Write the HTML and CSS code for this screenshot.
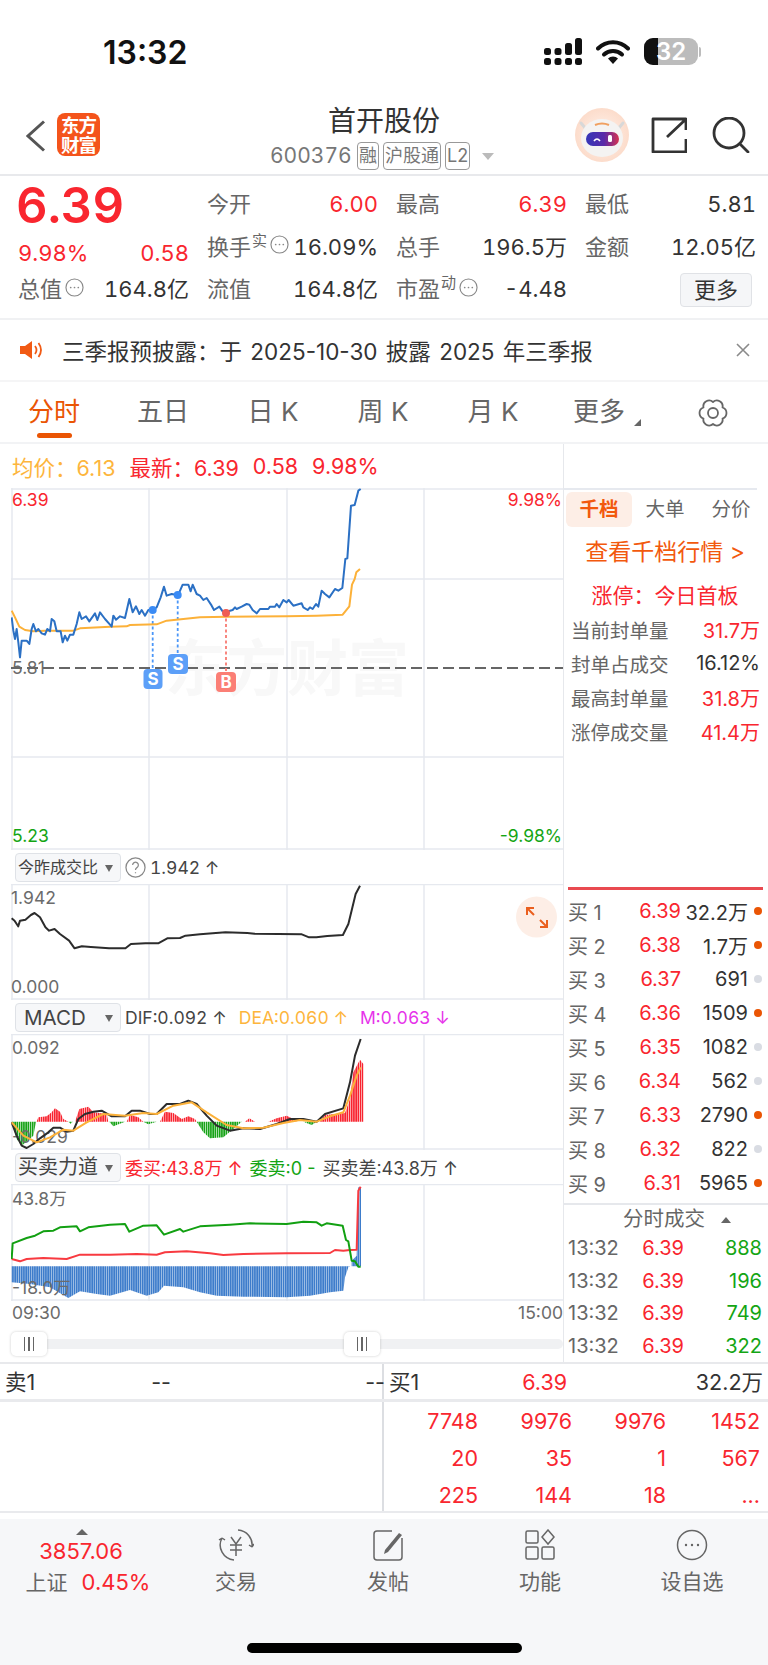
FILE: index.html
```html
<!DOCTYPE html>
<html lang="zh-CN">
<head>
<meta charset="utf-8">
<title>首开股份</title>
<link rel="stylesheet" href="styles.css">
</head>
<body>
<div class="page">
  <header class="status">
    <span class="clock">13:32</span>
    <div class="status-icons">
      <svg class="sig" viewBox="0 0 38 27"><g fill="#111"><rect x="0" y="10" width="7" height="7" rx="2.5"/><rect x="0" y="20" width="7" height="7" rx="2.5"/><rect x="10.500" y="10" width="7" height="7" rx="2.5"/><rect x="10.500" y="20" width="7" height="7" rx="2.5"/><rect x="21" y="5" width="7" height="12" rx="2.5"/><rect x="21" y="20" width="7" height="7" rx="2.5"/><rect x="31" y="0" width="7" height="17" rx="2.5"/><rect x="31" y="20" width="7" height="7" rx="2.5"/></g></svg>
      <svg class="wifi" viewBox="0 0 34 24"><path d="M2 8.500a21 21 0 0 1 30 0" fill="none" stroke="#111" stroke-width="4" stroke-linecap="round"/><path d="M8 14.500a13 13 0 0 1 18 0" fill="none" stroke="#111" stroke-width="4" stroke-linecap="round"/><path d="M17 24l-5-5.500a7 7 0 0 1 10 0z" fill="#111"/></svg>
      <div class="batt"><span class="batt-fill"></span><span class="batt-num">32</span></div>
      <span class="batt-nub"></span>
    </div>
  </header>

  <nav class="nav">
    <svg class="back" viewBox="0 0 20 32"><path d="M18 1.500 2 16l16 14.500" fill="none" stroke="#555" stroke-width="3"/></svg>
    <div class="logo">东方<br>财富</div>
    <div class="nav-title">
      <div class="stock-name">首开股份</div>
      <div class="stock-sub"><span class="code">600376</span><span class="tag">融</span><span class="tag">沪股通</span><span class="tag">L2</span><span class="caret"></span></div>
    </div>
    <div class="nav-right">
      <svg class="robot" viewBox="0 0 54 54">
        <defs>
          <radialGradient id="halo"><stop offset="0" stop-color="#fff3ec"/><stop offset="1" stop-color="#fcdccb"/></radialGradient>
          <linearGradient id="visor"><stop offset="0" stop-color="#3436b8"/><stop offset=".55" stop-color="#5a2aa8"/><stop offset="1" stop-color="#d63250"/></linearGradient>
        </defs>
        <circle cx="27" cy="27" r="27" fill="url(#halo)"/>
        <path d="M6 15l5 6M48 15l-5 6" stroke="#d8d8d8" stroke-width="3" stroke-linecap="round"/>
        <ellipse cx="27" cy="30" rx="21" ry="19" fill="#f4f3f2"/>
        <path d="M20 17q7-3 14 0" stroke="#f0a060" stroke-width="2" fill="none"/>
        <rect x="11" y="24" width="33" height="14" rx="7" fill="url(#visor)"/>
        <path d="M19 33q3-4 6 0" stroke="#fff" stroke-width="1.600" fill="none"/>
        <rect x="33" y="27" width="4" height="7" rx="1.500" fill="#fff"/>
      </svg>
      <svg class="share" viewBox="0 0 36 36"><path d="M22 2H2v33h33V22M16 20 34 3M22 2h13v11" fill="none" stroke="#333" stroke-width="2.800" stroke-linejoin="round"/></svg>
      <svg class="search" viewBox="0 0 38 36"><circle cx="17" cy="16" r="15" fill="none" stroke="#333" stroke-width="2.800"/><path d="M28 27l8 8" stroke="#333" stroke-width="2.800" stroke-linecap="round"/></svg>
    </div>
  </nav>

  <section class="quote">
    <div class="big red">6.39</div>
    <div class="cell"><span class="lb">今开</span><span class="red">6.00</span></div>
    <div class="cell"><span class="lb">最高</span><span class="red">6.39</span></div>
    <div class="cell"><span class="lb">最低</span><span>5.81</span></div>
    <div class="cell chg red"><span>9.98%</span><span>0.58</span></div>
    <div class="cell"><span class="lb">换手<sup class="sup">实</sup><svg class="more-dot" viewBox="0 0 20 20"><circle cx="10" cy="10" r="9" /><path d="M6 10h.01M10 10h.01M14 10h.01"/></svg></span><span>16.09%</span></div>
    <div class="cell"><span class="lb">总手</span><span>196.5万</span></div>
    <div class="cell"><span class="lb">金额</span><span>12.05亿</span></div>
    <div class="cell"><span class="lb">总值<svg class="more-dot" viewBox="0 0 20 20"><circle cx="10" cy="10" r="9" /><path d="M6 10h.01M10 10h.01M14 10h.01"/></svg></span><span>164.8亿</span></div>
    <div class="cell"><span class="lb">流值</span><span>164.8亿</span></div>
    <div class="cell"><span class="lb">市盈<sup class="sup">动</sup><svg class="more-dot" viewBox="0 0 20 20"><circle cx="10" cy="10" r="9" /><path d="M6 10h.01M10 10h.01M14 10h.01"/></svg></span><span>-4.48</span></div>
    <div class="cell cell-end"><button class="more-btn">更多</button></div>
  </section>

  <section class="notice">
    <svg class="speaker" viewBox="0 0 24 18"><path d="M0 5h5l7-5v18l-7-5H0z" fill="#f15a14"/><path d="M15 5q3 4 0 8M18.500 2q5 7 0 14" fill="none" stroke="#f15a14" stroke-width="1.800"/></svg>
    <span class="notice-text">三季报预披露：于 2025-10-30 披露 2025 年三季报</span>
    <svg class="close" viewBox="0 0 14 14"><path d="M1 1l12 12M13 1 1 13" stroke="#8a8a8a" stroke-width="1.600"/></svg>
  </section>

  <section class="tabs">
    <div class="tab on">分时</div>
    <div class="tab">五日</div>
    <div class="tab">日 K</div>
    <div class="tab">周 K</div>
    <div class="tab">月 K</div>
    <div class="tab tab-last">更多<span class="corner"></span></div>
    <svg class="gear" viewBox="0 0 30 28"><path d="M15 3A5.800 5.800 0 0 1 24.530 8.500 5.800 5.800 0 0 1 24.530 19.500 5.800 5.800 0 0 1 15 25 5.800 5.800 0 0 1 5.470 19.500 5.800 5.800 0 0 1 5.470 8.500 5.800 5.800 0 0 1 15 3Z" fill="none" stroke="#666" stroke-width="1.800" stroke-linejoin="round"/><circle cx="15" cy="14" r="5" fill="none" stroke="#666" stroke-width="1.800"/></svg>
  </section>

  <main class="main">
    <div class="left">
      <div class="info"><span class="amber">均价：6.13</span><span class="red">最新：6.39</span><span class="red">0.58</span><span class="red">9.98%</span></div>

      <div class="panel p1">
        <svg class="chart" viewBox="11 489 552 362">
          <defs>
            <pattern id="st-r" patternUnits="userSpaceOnUse" width="6.600" height="10"><rect width="5" height="10" fill="#f8232f"/></pattern>
            <pattern id="st-g" patternUnits="userSpaceOnUse" width="6.600" height="10"><rect width="5" height="10" fill="#17a317"/></pattern>
            <pattern id="st-b" patternUnits="userSpaceOnUse" width="6.600" height="10"><rect width="5.400" height="10" fill="#3d7ccb"/></pattern>
          </defs>
          <text class="wm" x="165" y="692">东方财富</text>
          <path class="g" d="M12 489V851M149 489V851M287 489V851M424 489V851M11 490H563M11 580H563M11 758H563M11 850H563"/>
          <text class="ax red" x="12" y="507">6.39</text>
          <text class="ax red end" x="562" y="507">9.98%</text>
          <text class="ax gray" x="12" y="675">5.81</text>
          <text class="ax green" x="12" y="843">5.23</text>
          <text class="ax green end" x="562" y="843">-9.98%</text>
          <path class="dash" d="M11 669H563"/>
          <path class="vb" d="M152.700 611V672M177.700 596V657"/>
          <path class="vr" d="M226 614V675"/>
          <g transform="translate(10 575) scale(.33333)">
            <polyline class="ln amb" points="5,110 15,130 28,158 45,168 70,172 105,170 190,170 210,163 300,158 350,157 360,153 440,151 470,140 520,135 570,130 650,128 830,127 920,125 998,122 1018,97 1026,32 1034,15 1039,-5 1050,-15"/>
            <polyline class="ln blu" points="5,130 10,170 15,195 20,165 25,205 30,250 35,200 50,200 58,210 65,165 70,150 78,172 85,165 95,178 105,182 112,165 120,172 125,135 133,142 140,172 152,172 158,205 165,185 172,200 180,182 190,182 200,150 208,115 215,135 228,127 238,142 255,118 262,138 270,115 285,135 300,152 305,158 310,125 318,137 330,127 345,132 358,75 368,115 378,97 388,120 395,108 405,125 415,108 428,107 440,100 452,70 462,38 470,65 485,60 497,62 505,62 518,32 535,32 542,52 548,32 560,60 570,65 580,78 590,72 605,95 612,108 628,98 638,112 648,118 660,110 668,108 675,100 680,105 695,98 710,90 718,92 728,108 740,118 750,105 775,105 780,98 795,98 800,90 808,100 820,78 830,85 836,78 850,95 875,88 880,100 893,108 900,100 908,105 918,90 925,98 935,50 945,60 958,70 975,45 985,50 997,42 1006,-45 1012,-47 1023,-205 1034,-207 1045,-250 1052,-255"/>
          </g>
          <circle class="dot-b" cx="152.700" cy="611" r="4"/>
          <circle class="dot-b" cx="177.700" cy="596" r="4"/>
          <circle class="dot-r" cx="226" cy="614" r="4"/>
          <rect class="bs-b" x="143.500" y="670" width="19" height="20" rx="4"/>
          <text class="bs" x="153" y="686">S</text>
          <rect class="bs-b" x="168" y="655" width="20" height="20" rx="4"/>
          <text class="bs" x="178" y="671">S</text>
          <rect class="bs-r" x="216" y="673" width="20" height="20" rx="4"/>
          <text class="bs" x="226" y="689">B</text>
        </svg>
      </div>

      <div class="phead">
        <div class="dd dd-sm">今昨成交比<span class="dd-caret"></span></div>
        <svg class="help" viewBox="0 0 22 22"><circle cx="11" cy="11" r="10" fill="none" stroke="#888" stroke-width="1.300"/><path d="M8 8.500a3 3 0 1 1 4.500 2.600c-1 .6-1.500 1.100-1.500 2.400M11 16v1" fill="none" stroke="#888" stroke-width="1.300"/></svg>
        <span class="ph-v">1.942 ↑</span>
      </div>
      <div class="panel p2">
        <svg class="chart" viewBox="11 885 552 116">
          <path class="g" d="M12 885V1001M149 885V1001M287 885V1001M424 885V1001M11 885.500H563M11 1000H563"/>
          <text class="ax gray" x="11" y="905">1.942</text>
          <text class="ax gray" x="11" y="994">0.000</text>
          <g transform="translate(0 850) scale(.36364 .33333)">
            <polyline class="ln blk" points="32,208 40,215 50,232 55,215 70,212 85,198 95,192 110,205 125,235 135,245 150,240 165,255 190,275 205,298 215,295 225,292 250,294 300,298 345,298 360,285 400,283 435,283 460,268 495,267 510,260 550,256 620,250 680,252 700,254 830,256 850,265 870,265 900,261 943,258 958,225 968,180 978,135 990,110"/>
          </g>
          <circle class="exp-bg" cx="536.500" cy="918" r="20.500"/>
          <path class="exp" d="M527 909l7 7M540 921l7 7M527 916v-7h7M547 921v7h-7"/>
        </svg>
      </div>

      <div class="phead">
        <div class="dd dd-lg">MACD<span class="dd-caret"></span></div>
        <span class="ph-v">DIF:0.092 ↑</span><span class="ph-v amber">DEA:0.060 ↑</span><span class="ph-v magenta">M:0.063 ↓</span>
      </div>
      <div class="panel p3">
        <svg class="chart" viewBox="11 1035 552 116">
          <path class="g" d="M12 1035V1151M149 1035V1151M287 1035V1151M424 1035V1151M11 1035.500H563M11 1150H563"/>
          <g transform="translate(10 1040) scale(.33333)">
            <path fill="url(#st-r)" d="M80 248 85 235 110 232 125 220 135 208 150 218 160 240 175 248ZM195 248 208 210 235 203 250 220 290 225 295 248ZM350 248 360 228 385 235 400 248ZM450 248 465 218 490 222 515 240 535 232 555 240 560 248ZM705 248 718 238 735 248ZM775 248 800 238 830 230 850 240 860 248ZM930 248 945 228 1005 222 1020 180 1030 100 1050 62 1060 75 1060 248Z"/>
            <path fill="url(#st-g)" d="M5 248 78 248 70 290 35 320 20 300ZM175 248 188 248 182 254ZM298 248 345 248 310 262ZM400 248 440 248 415 256ZM560 248 695 248 670 270 640 295 600 298 580 280ZM880 248 920 248 905 258Z"/>
          </g>
          <text class="ax gray" x="12" y="1055">0.092</text>
          <text class="ax gray" x="12" y="1144">-0.029</text>
          <g transform="translate(10 1040) scale(.33333)">
            <polyline class="ln blk" points="5,250 20,290 35,320 50,327 70,315 90,298 115,280 130,266 150,266 170,278 190,275 205,240 225,225 250,218 275,215 305,232 345,232 365,215 390,215 420,225 440,225 470,195 510,195 535,185 560,195 590,230 620,260 660,275 700,268 750,270 800,255 840,240 880,240 920,248 945,225 1000,208 1020,130 1035,50 1052,0"/>
            <polyline class="ln amb" points="5,250 40,290 80,310 120,295 160,272 190,275 230,250 280,225 345,230 400,222 440,225 490,200 545,190 590,220 650,258 700,268 760,266 820,252 870,243 920,248 960,232 1000,220 1020,170 1040,110 1052,85"/>
          </g>
        </svg>
      </div>

      <div class="phead">
        <div class="dd">买卖力道<span class="dd-caret"></span></div>
        <span class="ph-s red">委买:43.8万 ↑</span><span class="ph-s green">委卖:0 -</span><span class="ph-s">买卖差:43.8万 ↑</span>
      </div>
      <div class="panel p4">
        <svg class="chart" viewBox="11 1185 552 117">
          <path class="g" d="M12 1185V1302M149 1185V1302M287 1185V1302M424 1185V1302M11 1185.500H563M11 1301H563"/>
          <g transform="translate(10 1185) scale(.33333)">
            <path fill="url(#st-b)" d="M5 247 5 295 60 300 120 310 175 342 210 322 260 330 300 335 360 318 410 335 445 325 462 305 520 310 570 325 620 335 700 338 830 340 900 335 960 325 1000 320 1005 280 1015 250 1020 247ZM1025 247 1025 230 1040 215 1045 10 1053 10 1053 247Z"/>
          </g>
          <text class="ax gray" x="12" y="1206">43.8万</text>
          <text class="ax gray" x="12" y="1295">-18.0万</text>
          <g transform="translate(10 1185) scale(.33333)">
            <polyline class="ln red-l" points="5,225 30,232 50,225 100,222 170,225 210,212 300,212 380,210 440,212 465,205 530,202 600,208 640,213 700,210 830,208 960,207 975,198 1000,200 1020,198 1040,197 1045,20 1052,8"/>
            <polyline class="ln grn-l" points="5,225 8,178 50,162 75,155 100,142 130,140 150,130 200,127 210,142 235,130 300,122 345,120 358,143 400,125 440,124 462,152 510,135 520,143 570,127 660,122 720,118 830,120 880,113 920,115 935,125 950,118 998,125 1008,168 1015,172 1025,230 1035,232 1045,248 1052,248"/>
          </g>
        </svg>
      </div>
      <div class="axis"><span>09:30</span><span>15:00</span></div>
      <div class="slider">
        <div class="track">
          <div class="handle h1"><i></i><i></i><i></i></div>
          <div class="handle h2"><i></i><i></i><i></i></div>
        </div>
      </div>
    </div>

    <aside class="right">
      <div class="rtabs"><span class="rtab on">千档</span><span class="rtab">大单</span><span class="rtab">分价</span></div>
      <div class="link">查看千档行情 &gt;</div>
      <div class="limit">涨停：今日首板</div>
      <div class="stat"><span>当前封单量</span><b class="red">31.7万</b></div>
      <div class="stat"><span>封单占成交</span><b>16.12%</b></div>
      <div class="stat"><span>最高封单量</span><b class="red">31.8万</b></div>
      <div class="stat"><span>涨停成交量</span><b class="red">41.4万</b></div>

      <div class="book">
        <div class="bk"><span class="bk-l">买 1</span><span class="red">6.39</span><span>32.2万</span><i class="d o"></i></div>
        <div class="bk"><span class="bk-l">买 2</span><span class="red">6.38</span><span>1.7万</span><i class="d o"></i></div>
        <div class="bk"><span class="bk-l">买 3</span><span class="red">6.37</span><span>691</span><i class="d"></i></div>
        <div class="bk"><span class="bk-l">买 4</span><span class="red">6.36</span><span>1509</span><i class="d o"></i></div>
        <div class="bk"><span class="bk-l">买 5</span><span class="red">6.35</span><span>1082</span><i class="d"></i></div>
        <div class="bk"><span class="bk-l">买 6</span><span class="red">6.34</span><span>562</span><i class="d"></i></div>
        <div class="bk"><span class="bk-l">买 7</span><span class="red">6.33</span><span>2790</span><i class="d o"></i></div>
        <div class="bk"><span class="bk-l">买 8</span><span class="red">6.32</span><span>822</span><i class="d"></i></div>
        <div class="bk"><span class="bk-l">买 9</span><span class="red">6.31</span><span>5965</span><i class="d o"></i></div>
      </div>
      <div class="ticks-head">分时成交<span class="up-tri"></span></div>
      <div class="tk"><span class="tk-t">13:32</span><span class="red">6.39</span><span class="green">888</span></div>
      <div class="tk"><span class="tk-t">13:32</span><span class="red">6.39</span><span class="green">196</span></div>
      <div class="tk"><span class="tk-t">13:32</span><span class="red">6.39</span><span class="green">749</span></div>
      <div class="tk"><span class="tk-t">13:32</span><span class="red">6.39</span><span class="green">322</span></div>
    </aside>
  </main>

  <section class="levels">
    <div class="lv-row">
      <div class="lv-half lv-sell"><span>卖1</span><span>--</span><span>--</span></div>
      <div class="lv-half lv-buy"><span>买1</span><span class="red">6.39</span><span>32.2万</span></div>
    </div>
    <div class="queue-row">
      <div class="queue-empty"></div>
      <div class="queue red">
        <span>7748</span><span>9976</span><span>9976</span><span>1452</span>
        <span>20</span><span>35</span><span>1</span><span>567</span>
        <span>225</span><span>144</span><span>18</span><span>...</span>
      </div>
    </div>
  </section>

  <footer class="bottom">
    <div class="bb index">
      <span class="tri"></span>
      <span class="idx red">3857.06</span>
      <span class="bb-l">上证<em class="red">0.45%</em></span>
    </div>
    <div class="bb">
      <svg class="bi" viewBox="0 0 36 32"><path d="M20 1a15 15 0 0 1 14 17M34 18l2-3M34 18l-3-2M16 31A15 15 0 0 1 4 9M4 9l-3 2M4 9l3 2" fill="none" stroke="#666" stroke-width="1.500"/><path d="M13 8l5 7 5-7M12 16h12M12 21h12M18 15v12" fill="none" stroke="#666" stroke-width="1.500"/></svg>
      <span class="bb-l">交易</span>
    </div>
    <div class="bb">
      <svg class="bi" viewBox="0 0 36 32"><path d="M22 2H7a3 3 0 0 0-3 3v23a3 3 0 0 0 3 3h22a3 3 0 0 0 3-3V9" fill="none" stroke="#666" stroke-width="1.500"/><path d="M15 21 29 4l3 2-14 17-4 2z" fill="#666"/></svg>
      <span class="bb-l">发帖</span>
    </div>
    <div class="bb">
      <svg class="bi" viewBox="0 0 36 32"><g fill="none" stroke="#666" stroke-width="1.500"><rect x="4" y="2" width="12" height="12" rx="1.500"/><rect x="4" y="18" width="12" height="12" rx="1.500"/><rect x="20" y="18" width="12" height="12" rx="1.500"/><path d="M26 1l6 7-6 7-6-7z"/></g></svg>
      <span class="bb-l">功能</span>
    </div>
    <div class="bb">
      <svg class="bi" viewBox="0 0 36 32"><circle cx="18" cy="16" r="14.500" fill="none" stroke="#666" stroke-width="1.500"/><path d="M12 16h.01M18 16h.01M24 16h.01" stroke="#666" stroke-width="2.400" stroke-linecap="round"/></svg>
      <span class="bb-l">设自选</span>
    </div>
    <span class="home"></span>
  </footer>
</div>
</body>
</html>
```

FILE: styles.css
```css
* { box-sizing: border-box; }
html, body { margin: 0; padding: 0; background: #fff; }
body { font-family: "Inter", "Noto Sans CJK SC", sans-serif; color: #333; }
.page { position: relative; width: 768px; height: 1665px; overflow: hidden; display: flex; flex-direction: column; }
.red { color: #f9262f; }
.green { color: #14a514; }
.amber { color: #fdb53c; }
.magenta { color: #e633ea; }

/* status */
.status { height: 95px; flex: none; display: flex; justify-content: space-between; padding: 38px 67px 0 103px; align-items: flex-start; }
.clock { font-size: 32px; font-weight: 600; line-height: 30px; color: #111; }
.status-icons { display: flex; align-items: center; height: 27px; }
.sig { width: 38px; height: 27px; }
.wifi { width: 34px; height: 24px; margin-left: 14px; }
.batt { position: relative; width: 54px; height: 27px; margin-left: 14px; border-radius: 9px; background: #bcbcbc; overflow: hidden; }
.batt-fill { position: absolute; left: 0; top: 0; bottom: 0; width: 14px; background: #111; }
.batt-num { position: absolute; inset: 0; text-align: center; font-size: 24px; font-weight: 600; line-height: 27px; color: #fff; }
.batt-nub { width: 2px; height: 10px; margin-left: 1px; background: #bcbcbc; border-radius: 0 2px 2px 0; }

/* nav */
.nav { position: relative; height: 81px; flex: none; display: flex; align-items: flex-start; padding: 18px 0 0 26px; border-bottom: 2px solid #e8e9ec; }
.back { width: 20px; height: 32px; margin-top: 7px; }
.logo { width: 43px; height: 43px; margin: 0 0 0 11px; border-radius: 8px; background: #f4541b; color: #fff; font-size: 18.500px; font-weight: 700; line-height: 20px; text-align: center; padding-top: 2px; letter-spacing: -1px; }
.nav-title { position: absolute; left: 0; right: 0; top: 8px; text-align: center; }
.stock-name { font-size: 28px; line-height: 36px; color: #333; }
.stock-sub { display: flex; align-items: center; margin: 2px 0 0 270px; height: 30px; color: #777; }
.code { font-size: 21px; line-height: 30px; width: 87px; text-align: left; font-variant-numeric: tabular-nums; }
.tag { height: 28px; padding: 0 1px; margin-right: 4px; border: 1px solid #999; border-radius: 4px; font-size: 18px; line-height: 26px; }
.caret { margin-left: 8px; width: 0; height: 0; border: 6px solid transparent; border-top: 7px solid #bbb; border-bottom: 0; }
.nav-right { position: absolute; left: 575px; top: 13px; display: flex; align-items: flex-start; }
.robot { width: 54px; height: 54px; }
.share { width: 36px; height: 36px; margin: 9px 0 0 22px; }
.search { width: 38px; height: 36px; margin: 9px 0 0 25px; }

/* quote */
.quote { flex: none; height: 144px; padding: 7px 0 0 18px; display: grid; grid-template-columns: repeat(4, 171px); column-gap: 18px; grid-auto-rows: 42.500px; border-bottom: 2px solid #f0f1f3; font-size: 22px; font-variant-numeric: tabular-nums; }
.big { font-size: 49px; font-weight: 600; line-height: 43px; margin: 1px 0 0 -2px; letter-spacing: 0; }
.cell { display: flex; justify-content: space-between; align-items: center; line-height: 30px; }
.lb { color: #666; font-size: 22px; display: flex; align-items: center; white-space: nowrap; }
.sup { font-size: 15px; line-height: 18px; align-self: flex-start; margin-left: 1px; vertical-align: baseline; }
.more-dot { width: 19px; height: 19px; margin: -4px 0 0 3px; fill: none; stroke: #888; stroke-width: 1.200; stroke-linecap: round; }
.more-dot path { stroke-width: 1.800; }
.chg { padding-top: 12px; }
.cell-end { justify-content: flex-end; padding: 2px 4px 0 0; }
.more-btn { width: 72px; height: 34px; padding: 0; background: #f5f6f8; border: 1px solid #e0e2e6; border-radius: 4px; font-family: inherit; font-size: 22px; line-height: 30px; color: #333; }

/* notice */
.notice { flex: none; height: 62px; display: flex; align-items: center; padding: 0 18px 0 20px; border-bottom: 2px solid #f5f5f6; }
.speaker { width: 24px; height: 18px; }
.notice-text { margin-left: 18px; font-size: 22.500px; word-spacing: 2px; color: #333; flex: 1; }
.close { width: 14px; height: 14px; }

/* tabs */
.tabs { position: relative; flex: none; height: 62px; display: grid; grid-template-columns: 108px repeat(5, 110px); border-bottom: 2px solid #f2f3f5; }
.tab { position: relative; font-size: 26px; line-height: 60px; text-align: center; color: #666; }
.tab-last { padding-right: 8px; }
.tab.on { color: #ea5504; }
.tab.on::after { content: ""; position: absolute; left: 37px; top: 51px; width: 35px; height: 5px; border-radius: 3px; background: #ea5504; }
.corner { position: absolute; left: 86px; top: 37px; width: 0; height: 0; border-left: 7px solid transparent; border-bottom: 7px solid #666; }
.gear { position: absolute; left: 698px; top: 17px; width: 30px; height: 28px; }

/* main */
.main { flex: none; height: 918px; display: flex; }
.left { width: 563px; flex: none; display: flex; flex-direction: column; }
.info { height: 44px; flex: none; display: flex; align-items: center; padding-left: 12px; gap: 14px; font-size: 21.500px; }
.panel { margin-left: 11px; width: 552px; flex: none; position: relative; }
.p1 { height: 362px; }
.p2, .p3 { height: 116px; }
.p4 { height: 117px; }
.chart { display: block; width: 100%; height: 100%; }
.g { fill: none; stroke: #e6e9ef; stroke-width: 1.500; }
.ax { font-size: 17.500px; }
text.red { fill: #f9262f; }
text.green { fill: #14a514; }
text.gray { fill: #6b6b6b; }
.end { text-anchor: end; }
.wm { font-size: 61px; font-weight: 700; fill: #f8f8f8; }
.dash { fill: none; stroke: #666; stroke-width: 2; stroke-dasharray: 11 5; }
.vb { fill: none; stroke: #4a96f8; stroke-width: 1.800; stroke-dasharray: 3 2.500; }
.vr { fill: none; stroke: #f87a72; stroke-width: 1.800; stroke-dasharray: 3 2.500; }
.ln { fill: none; vector-effect: non-scaling-stroke; stroke-linejoin: round; stroke-width: 2; }
.blu { stroke: #2b70c4; }
.amb { stroke: #fcb139; }
.blk { stroke: #2c2c2c; }
.red-l { stroke: #f83a40; }
.grn-l { stroke: #12a012; }
.dot-b { fill: #3a8bf5; }
.dot-r { fill: #ef5d54; }
.bs-b { fill: #5c9ff8; }
.bs-r { fill: #fb7f76; }
.bs { fill: #fff; font-size: 17px; font-weight: 700; text-anchor: middle; }
.exp-bg { fill: #fdeee6; }
.exp { fill: none; stroke: #ea5f1e; stroke-width: 2; }

.phead { flex: none; height: 34px; display: flex; align-items: center; padding-left: 15px; gap: 4px; }
.dd { position: relative; width: 106px; height: 29px; padding-left: 2px; border: 1px solid #dfe2e7; border-radius: 4px; background: #f6f7f9; font-size: 20px; line-height: 27px; color: #444; }
.dd-sm { font-size: 16px; }
.dd-lg { font-size: 20.500px; padding-left: 8px; }
.dd-caret { position: absolute; left: 89px; top: 11px; width: 0; height: 0; border: 4px solid transparent; border-top: 7px solid #666; border-bottom: 0; }
.help { width: 21px; height: 21px; }
.ph-v { font-size: 17.500px; color: #444; margin-right: 8px; white-space: nowrap; font-variant-numeric: tabular-nums; }
.ph-v.amber { color: #fdb53c; }
.ph-v.magenta { color: #e633ea; }
.ph-s { font-size: 18px; color: #444; margin-right: 3px; white-space: nowrap; }
.ph-s.red { color: #f9262f; }
.ph-s.green { color: #14a514; }
.axis { flex: none; height: 25px; display: flex; justify-content: space-between; padding: 0 0 0 12px; font-size: 17.500px; line-height: 24px; color: #6b6b6b; }
.slider { flex: none; height: 36px; padding: 13px 0 0 11px; }
.track { position: relative; height: 10px; border-radius: 5px; background: #f0f1f3; }
.handle { position: absolute; top: -7px; width: 36px; height: 24px; display: flex; justify-content: center; align-items: center; gap: 3px; background: #fff; border-radius: 5px; box-shadow: 0 0 3px rgba(0,0,0,.2); }
.handle i { width: 1.500px; height: 14px; background: #666; }
.h1 { left: 0; }
.h2 { left: 333px; }

/* right */
.right { width: 205px; min-width: 0; flex: none; border-left: 1px solid #e6e8ec; display: flex; flex-direction: column; }
.rtabs { position: relative; margin-top: 46px; padding: 2px 0 0 2px; height: 39px; display: flex; font-size: 19.500px; color: #666; }
.rtabs::before { content: ""; position: absolute; left: 0; right: 11px; top: -2px; height: 2px; background: #e6e9ef; }
.rtab { width: 66px; height: 35px; line-height: 35px; text-align: center; }
.rtab.on { background: #fdeee6; border-radius: 6px; color: #f2590d; font-weight: 700; }
.link { height: 46px; line-height: 46px; text-align: center; font-size: 23px; color: #f2590d; padding-right: 2px; }
.limit { height: 35px; margin-top: 2px; padding: 5px 2px 0 0; line-height: 28px; text-align: center; font-size: 21px; color: #f9262f; }
.stat { height: 34px; padding: 0 8px 0 7px; display: flex; justify-content: space-between; align-items: center; font-size: 19.500px; color: #666; }
.stat b { font-size: 20px; font-weight: 400; color: #333; }
.stat b.red { color: #f9262f; }
.book { margin-top: auto; border-top: 3px solid #e94a50; margin-left: 4px; margin-right: 5px; padding-top: 4px; height: 316px; }
.bk { height: 34px; display: grid; grid-template-columns: 49px 64px 67px 1fr; align-items: center; font-size: 20px; color: #333; text-align: right; }
.bk-l { color: #666; text-align: left; white-space: nowrap; }
.d { justify-self: end; width: 8px; height: 8px; border-radius: 50%; background: #d9dce3; margin-right: 1px; }
.d.o { background: #ea5504; }
.ticks-head { position: relative; flex: none; height: 29px; border-top: 2px solid #e6e8ec; text-align: left; padding-left: 59px; font-size: 20.500px; line-height: 28px; color: #666; }
.up-tri { position: absolute; left: 157px; top: 12px; width: 0; height: 0; border: 5px solid transparent; border-bottom: 6px solid #666; border-top: 0; }
.tk { height: 32.500px; display: grid; grid-template-columns: 65px 51px 1fr; align-items: center; padding: 0 6px 0 4px; font-size: 20px; text-align: right; flex: none; }
.tk-t { color: #666; text-align: left; }

/* levels */
.levels { flex: none; height: 154px; border-top: 2px solid #e8e9ec; }
.lv-row { height: 38px; display: flex; border-bottom: 3px solid #e9eaed; }
.lv-half { font-size: 21.500px; display: grid; align-items: center; line-height: 34px; }
.lv-sell { width: 384px; border-right: 2px solid #dcdee2; grid-template-columns: 60px 106px 214px; padding-left: 5px; }
.lv-sell span + span { text-align: right; }
.lv-buy { width: 384px; grid-template-columns: 60px 118px 196px; padding-left: 5px; }
.lv-buy span + span { text-align: right; }
.queue-row { height: 111px; display: flex; border-bottom: 2px solid #e9eaed; }
.queue-empty { width: 384px; border-right: 2px solid #dcdee2; }
.queue { display: grid; grid-template-columns: repeat(4, 94px); grid-auto-rows: 37px; padding-top: 1px; font-size: 21.500px; line-height: 37px; text-align: right; }

/* bottom */
.bottom { position: relative; flex: 1; margin-top: 3px; background: #f6f7f9; display: flex; align-items: flex-start; padding: 10px 0 0 8px; }
.bb { width: 152px; flex: none; display: flex; flex-direction: column; align-items: center; color: #666; }
.bi { width: 36px; height: 32px; }
.bb-l { margin-top: 5px; font-size: 21px; line-height: 32px; color: #666; white-space: nowrap; }
.bb-l em { font-style: normal; margin-left: 14px; font-size: 22px; }
.index { position: relative; }
.tri { width: 0; height: 0; margin-left: -5px; border: 6px solid transparent; border-bottom: 6px solid #666; border-top: 0; }
.idx { font-size: 22px; line-height: 30px; margin: 1px 0 0 -6px; }
.index .bb-l { margin: 0 0 0 8px; }
.home { position: absolute; left: 247px; top: 124px; width: 275px; height: 10px; border-radius: 5px; background: #000; }
```
